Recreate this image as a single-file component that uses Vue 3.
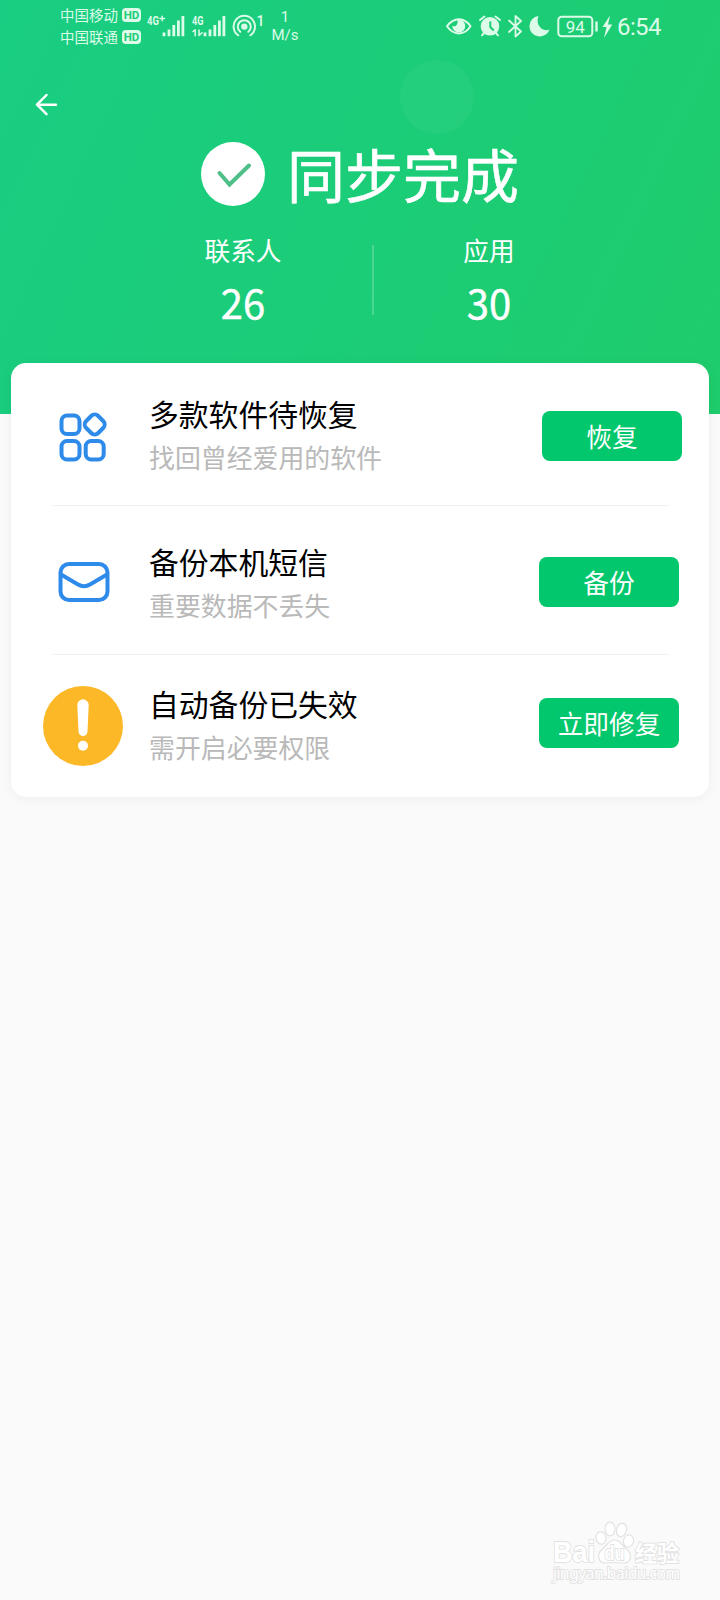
<template>
  <div class="page">
    <header class="header">
      <div class="status-bar">
        <div class="carriers">
          <div v-for="name in carriers" :key="name" class="carrier">
            <span class="carrier-name">{{ name }}</span>
            <span class="hd">HD</span>
          </div>
        </div>

        <!-- signal, hotspot -->
        <svg class="signals" width="124" height="54" viewBox="144 0 124 54">
          <g class="net-text">
            <text x="147" y="25" textLength="12" lengthAdjust="spacingAndGlyphs">4G</text>
            <text x="192" y="25" textLength="11.5" lengthAdjust="spacingAndGlyphs">4G</text>
          </g>
          <path class="line thin" d="M160 18.500h4.500M162.200 16.300v4.500" />
          <path class="line bar" d="M164 32.500v3.700M169 29.500v6.700M173.800 25v11.200M178.400 20.500v15.700M182.900 16v20.200" />
          <path class="line bar" d="M205 32.500v3.700M210 29.500v6.700M214.800 25v11.200M219.400 20.500v15.700M223.900 16v20.200" />
          <path class="line thin" d="M193 31.500l2.200-1.700v6M199 30v5.500l3-2.700" />
          <circle class="fill" cx="244.300" cy="26.600" r="3.200" />
          <path class="line" d="M240.300 31.800a6.500 6.500 0 1 1 8 0" />
          <path class="line" d="M238.300 35.300a10.700 10.700 0 1 1 12 0" />
          <text class="hotspot-count" x="256.500" y="25.500">1</text>
        </svg>

        <div class="speed">
          <span>1</span>
          <span>M/s</span>
        </div>

        <svg class="indicators" width="170" height="54" viewBox="444 0 170 54">
          <!-- eye -->
          <path class="line" d="M447 26.300c6.500-9.500 17.500-9.500 23.500 0c-6 9.500-17 9.500-23.500 0z" />
          <path class="fill" d="M457.500 19.700a6.500 6.500 0 1 1-5.200 6c2.500 1.600 6-.2 5.200-6z" />
          <!-- alarm -->
          <circle class="fill" cx="490" cy="26.300" r="9.300" />
          <path class="line" d="M480 20l4.500-3.500M500 20l-4.500-3.500M484 33l-2 2.300M496 33l2 2.300" />
          <path class="cut" d="M490.300 21.500v5.500l3.500 3.500" />
          <!-- bluetooth -->
          <path class="line bt" d="M509 20.500l12 11l-5.500 5v-20.500l5.500 5l-12 11" />
          <!-- moon -->
          <path class="fill" d="M538.500 16a10.300 10.300 0 1 0 11 13.500c-7.500 3-14.500-5-11-13.500z" />
          <!-- battery -->
          <rect class="line" x="558.300" y="16.800" width="34" height="19.400" rx="3.500" />
          <path class="line nub" d="M596.500 21.500v10" />
          <text class="battery-text" x="575.300" y="32.500" text-anchor="middle">{{ battery }}</text>
          <path class="fill" d="M610 15.500l-7.500 11.500h4l-2.500 11l8.300-13.500h-4.300z" />
        </svg>
        <span class="clock">6:54</span>
      </div>

      <span class="bubble"></span>

      <svg class="back" width="24" height="24" viewBox="0 0 24 24">
        <path d="M22 11.700H3.200M12.500 2L3 11.700L12.500 21.200" />
      </svg>

      <div class="result">
        <svg width="64" height="64" viewBox="0 0 64 64">
          <circle cx="32" cy="32" r="32" fill="#fff" />
          <path class="tick" d="M18.500 31l10 11.500l19.500-19" />
        </svg>
        <h1>同步完成</h1>
      </div>

      <div class="counts">
        <div v-for="item in counts" :key="item.label" class="count">
          <span class="count-label">{{ item.label }}</span>
          <span class="count-value">{{ item.value }}</span>
        </div>
      </div>
    </header>

    <main class="card">
      <section v-for="task in tasks" :key="task.id" class="task" :class="task.id">
        <div class="icon">
          <svg v-if="task.id === 'apps'" width="50" height="50" viewBox="0 0 50 50">
            <rect x="3.500" y="3.500" width="18" height="18.500" rx="5.500" />
            <rect x="3.500" y="29" width="18" height="18.500" rx="5.500" />
            <rect x="27.700" y="29" width="18" height="18.500" rx="5.500" />
            <rect x="28.200" y="4" width="17" height="17" rx="5" transform="rotate(45 36.700 12.500)" />
          </svg>
          <svg v-else-if="task.id === 'sms'" width="52" height="42" viewBox="0 0 52 42">
            <rect x="2.500" y="3" width="47" height="36" rx="8.500" />
            <path d="M3 13.500l17 10q6 3.500 12 0l17-10" />
          </svg>
          <svg v-else class="warn" width="80" height="80" viewBox="0 0 80 80">
            <circle cx="40" cy="40" r="40" fill="#fdb827" />
            <path d="M34.300 19a5.700 5.700 0 0 1 11.400 0l-1.200 26.500a4.500 4.500 0 0 1-9 0z" fill="#fff" />
            <circle cx="40" cy="59.700" r="5" fill="#fff" />
          </svg>
        </div>
        <div class="info">
          <h2>{{ task.title }}</h2>
          <p>{{ task.desc }}</p>
        </div>
        <button class="action">{{ task.action }}</button>
      </section>
    </main>

    <svg class="watermark" width="140" height="72" viewBox="545 1514 140 72">
      <ellipse cx="601" cy="1538" rx="5" ry="6.200" transform="rotate(-12 601 1538)" />
      <ellipse cx="610" cy="1529" rx="5" ry="6.800" />
      <ellipse cx="621.500" cy="1530" rx="5" ry="6.800" transform="rotate(14 621.500 1530)" />
      <ellipse cx="628.500" cy="1541" rx="5" ry="6.200" transform="rotate(14 628.500 1541)" />
      <path d="M614.500 1540c6 0 7 5 12 9c6 5 5 14-3 14q-9-1-18 0c-8 0-9-9-3-14c5-4 6-9 12-9z" />
      <text class="wm-brand" x="553" y="1561.500" textLength="42" lengthAdjust="spacingAndGlyphs">Bai</text>
      <text class="wm-du" x="604.500" y="1560" textLength="20" lengthAdjust="spacingAndGlyphs">du</text>
      <text class="wm-cn" x="635" y="1560.500" textLength="44">经验</text>
      <text class="wm-url" x="553" y="1579" textLength="127">jingyan.baidu.com</text>
    </svg>
  </div>
</template>

<script setup>
import { ref } from 'vue'

const carriers = ['中国移动', '中国联通']
const battery = ref(94)

const counts = ref([
  { label: '联系人', value: 26 },
  { label: '应用', value: 30 }
])

const tasks = [
  { id: 'apps', title: '多款软件待恢复', desc: '找回曾经爱用的软件', action: '恢复' },
  { id: 'sms', title: '备份本机短信', desc: '重要数据不丢失', action: '备份' },
  { id: 'auto', title: '自动备份已失效', desc: '需开启必要权限', action: '立即修复' }
]
</script>

<style>
body {
  margin: 0;
  background: #fafafa;
}
</style>

<style scoped>
.page {
  position: relative;
  width: 720px;
  height: 1600px;
  overflow: hidden;
  background: #fafafa;
  font-family: "Noto Sans CJK SC", sans-serif;
}

.header {
  position: relative;
  height: 414px;
  background: linear-gradient(115deg, #19cd82 0%, #1bcd79 45%, #1fcc6c 100%);
  color: #fff;
}

/* status bar */
.status-bar {
  display: flex;
  height: 54px;
  padding-left: 60px;
  color: #dcfbe9;
}

.carriers {
  width: 84px;
  padding-top: 4px;
}

.carrier {
  display: flex;
  align-items: center;
  gap: 4px;
  height: 22px;
  white-space: nowrap;
}

.carrier-name {
  font-size: 14.5px;
  line-height: 22px;
}

.hd {
  width: 19px;
  height: 14px;
  border-radius: 4px;
  background: #dcfbe9;
  color: #1bcd79;
  font: bold 11.5px/14px Roboto, sans-serif;
  text-align: center;
}

.line {
  fill: none;
  stroke: #dcfbe9;
  stroke-width: 2;
  stroke-linecap: round;
  stroke-linejoin: round;
}

.thin {
  stroke-width: 1.5;
}

.bar {
  stroke-width: 2.8;
  stroke-linecap: butt;
}

.bt {
  stroke-width: 1.8;
}

.nub {
  stroke-width: 2.4;
  stroke-linecap: butt;
}

.fill {
  fill: #dcfbe9;
}

.cut {
  fill: none;
  stroke: #1dcc72;
  stroke-width: 2;
}

.net-text {
  fill: #dcfbe9;
  font: bold 12px Roboto, sans-serif;
}

.hotspot-count {
  fill: #dcfbe9;
  font: 500 14px Roboto, sans-serif;
}

.speed {
  display: flex;
  flex-direction: column;
  align-items: center;
  width: 34px;
  padding-top: 8px;
  font: 15px/18px Roboto, sans-serif;
}

.indicators {
  margin-left: 142px;
}

.battery-text {
  fill: #dcfbe9;
  font: 17px Roboto, sans-serif;
}

.clock {
  margin-left: 3px;
  font: 24px/54px Roboto, sans-serif;
  letter-spacing: -0.6px;
}

.bubble {
  position: absolute;
  top: 60px;
  left: 400px;
  width: 74px;
  height: 74px;
  border-radius: 50%;
  background: rgba(255, 255, 255, 0.04);
}

.back {
  display: block;
  margin: 39px 0 0 34px;
  fill: none;
  stroke: #fff;
  stroke-width: 2.5;
  stroke-linecap: round;
  stroke-linejoin: round;
}

.result {
  display: flex;
  align-items: center;
  height: 64px;
  margin: 25px 0 0 201px;
}

.tick {
  fill: none;
  stroke: #4fbf88;
  stroke-width: 4;
  stroke-linecap: round;
}

.result h1 {
  margin: -2px 0 0 22px;
  font-size: 58px;
  font-weight: 400;
  line-height: 64px;
  -webkit-text-stroke: 0.6px #fff;
}

.counts {
  display: flex;
  margin: 25px 0 0 112px;
}

.count {
  position: relative;
  display: flex;
  flex-direction: column;
  align-items: center;
  width: 262px;
}

.count + .count {
  width: 230px;
}

.count:first-child::after {
  content: "";
  position: absolute;
  top: 14px;
  right: 0;
  width: 2px;
  height: 70px;
  background: rgba(255, 255, 255, 0.2);
}

.count-label {
  font-size: 25.7px;
  line-height: 38px;
}

.count-value {
  margin-top: 3px;
  font-size: 40px;
  line-height: 60px;
  -webkit-text-stroke: 0.4px #fff;
}

/* task card */
.card {
  position: relative;
  width: 698px;
  margin: -51px 0 0 11px;
  border-radius: 15px;
  background: #fff;
  box-shadow: 0 2px 12px rgba(0, 0, 0, 0.05);
}

.task {
  position: relative;
  display: flex;
  align-items: center;
  height: 149px;
  padding-right: 30px;
}

.task.apps {
  height: 142px;
  padding-right: 27px;
}

.task.auto {
  height: 143px;
}

.task + .task::before {
  content: "";
  position: absolute;
  top: 0;
  left: 41px;
  width: 617px;
  height: 1px;
  background: #f1f1f1;
}

.icon {
  display: flex;
  justify-content: center;
  width: 138px;
  padding: 0 2px;
  box-sizing: border-box;
  fill: none;
  stroke: #2f8bea;
  stroke-width: 4;
}

.icon svg {
  margin-left: 6px;
}

.icon .warn {
  stroke: none;
}

.info {
  flex: 1;
}

.info h2 {
  margin: 0;
  color: #000;
  font-size: 29.8px;
  font-weight: 400;
  line-height: 44px;
}

.info p {
  margin: 0;
  color: #b9b9b9;
  font-size: 25.9px;
  line-height: 44px;
}

.action {
  width: 140px;
  height: 50px;
  padding: 0;
  border: none;
  border-radius: 8px;
  background: #02c76c;
  color: #fff;
  font-family: inherit;
  font-size: 25.7px;
  line-height: 50px;
}

/* rows are not centred evenly */
.apps .icon {
  padding-top: 5px;
}

.apps .info {
  padding-top: 2px;
}

.apps .action,
.sms .action {
  margin-top: 4px;
}

.sms .icon {
  padding: 4px 0 0 2px;
}

.sms .info {
  padding-top: 7px;
}

.auto .info {
  padding-bottom: 2px;
}

.auto .action {
  margin-bottom: 5px;
}

.watermark {
  position: absolute;
  right: 35px;
  bottom: 14px;
  fill: #fff;
  stroke: #e2e2e2;
  stroke-width: 1.2;
}

.watermark text {
  paint-order: stroke;
  stroke-width: 1.8;
}

.wm-brand {
  font: bold 29px "Liberation Sans", sans-serif;
}

.wm-du {
  font: bold 20px "Liberation Sans", sans-serif;
}

.wm-cn {
  font: bold 22px "Noto Sans CJK SC", sans-serif;
}

.wm-url {
  font: 15.5px "Noto Sans", sans-serif;
}
</style>
